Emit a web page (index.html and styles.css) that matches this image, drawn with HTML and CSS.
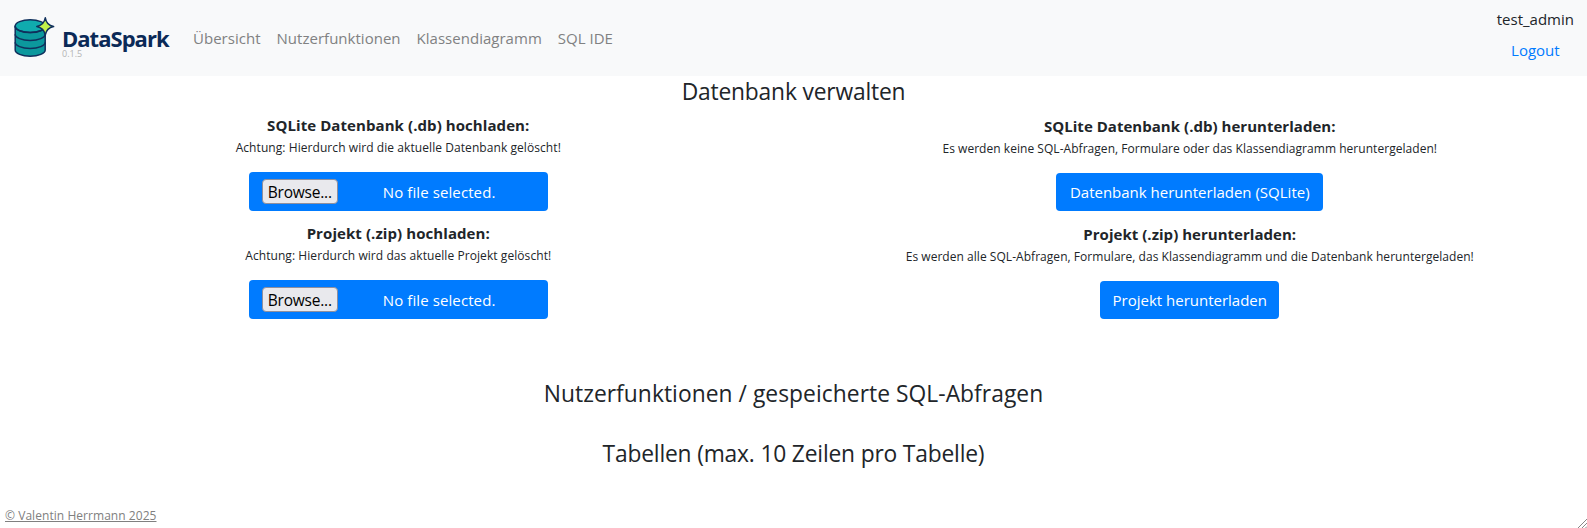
FILE: index.html
```
<!DOCTYPE html>
<html lang="de">
<head>
<meta charset="utf-8">
<title>DataSpark</title>
<link rel="stylesheet" href="styles.css">
</head>
<body>
<nav class="navbar">
  <a class="brand" href="#">
    <svg class="logo" width="42" height="42" viewBox="0 0 42 42" fill="none" stroke="#10305c" stroke-width="1.5" stroke-linejoin="round">
      <path d="M2.200 9v24c0 3.400 6.700 6.200 15 6.200s15-2.800 15-6.200V9z" fill="#0c989d"/>
      <ellipse cx="17.200" cy="9.200" rx="15" ry="6.400" fill="#10abae"/>
      <path d="M2.200 9.200c0 3.400 6.700 6.200 15 6.200s15-2.800 15-6.200M2.200 17.200c0 3.400 6.700 6.200 15 6.200s15-2.800 15-6.200M2.200 25.200c0 3.400 6.700 6.200 15 6.200s15-2.800 15-6.200"/>
      <path d="M32.300 .8Q33.400 8 40.600 9.500Q33.400 11 32.300 18Q31 11 23.800 9.500Q31 8 32.300 .8z" fill="#c3f24a"/>
    </svg>
    <span class="brand-text"><span class="name">DataSpark</span><span class="version">0.1.5</span></span>
  </a>
  <div class="links">
    <a href="#">Übersicht</a><a href="#">Nutzerfunktionen</a><a href="#">Klassendiagramm</a><a href="#">SQL IDE</a>
  </div>
  <div class="user"><span>test_admin</span><a href="#">Logout</a></div>
</nav>
<main>
  <h2 class="title title-main">Datenbank verwalten</h2>
  <div class="columns">
    <div class="col upload">
      <section class="item">
        <b>SQLite Datenbank (.db) hochladen:</b>
        <small>Achtung: Hierdurch wird die aktuelle Datenbank gelöscht!</small>
        <div class="file"><button class="browse">Browse...</button><span class="filename">No file selected.</span></div>
      </section>
      <section class="item">
        <b>Projekt (.zip) hochladen:</b>
        <small>Achtung: Hierdurch wird das aktuelle Projekt gelöscht!</small>
        <div class="file"><button class="browse">Browse...</button><span class="filename">No file selected.</span></div>
      </section>
    </div>
    <div class="col download">
      <section class="item">
        <b>SQLite Datenbank (.db) herunterladen:</b>
        <small>Es werden keine SQL-Abfragen, Formulare oder das Klassendiagramm heruntergeladen!</small>
        <a class="btn btn-db" href="#">Datenbank herunterladen (SQLite)</a>
      </section>
      <section class="item">
        <b>Projekt (.zip) herunterladen:</b>
        <small>Es werden alle SQL-Abfragen, Formulare, das Klassendiagramm und die Datenbank heruntergeladen!</small>
        <a class="btn btn-project" href="#">Projekt herunterladen</a>
      </section>
    </div>
  </div>
  <h2 class="title title-queries">Nutzerfunktionen / gespeicherte SQL-Abfragen</h2>
  <h2 class="title title-tables">Tabellen (max. 10 Zeilen pro Tabelle)</h2>
</main>
<footer class="footer"><a href="#">© Valentin Herrmann 2025</a></footer>
<svg class="grip" width="9" height="9" viewBox="0 0 9 9" stroke="#888" stroke-width="1"><path d="M0 9L9 0M4 9L9 4M7.500 9L9 7.500"/></svg>
</body>
</html>
```
FILE: styles.css
```
* { box-sizing: border-box; }
body {
  margin: 0;
  height: 528px;
  overflow: hidden;
  display: flex;
  flex-direction: column;
  position: relative;
  background: #fff;
  color: #212529;
  font: 15px/24px "Open Sans", "Noto Sans", sans-serif;
}
a { color: #007bff; text-decoration: none; }
.navbar {
  height: 76px;
  flex: none;
  display: flex;
  align-items: center;
  padding: 0 13px 0 13px;
  background: #f8f9fa;
}
.brand { display: flex; align-items: flex-start; width: 180px; height: 42px; }
.logo { flex: none; display: block; }
.brand-text { display: flex; flex-direction: column; padding: 9px 0 0 7px; }
.name { font-size: 22px; line-height: 24px; font-weight: 700; letter-spacing: -.98px; color: #0b2a57; }
.version { font-size: 9px; line-height: 10px; margin-top: -1px; color: #b4b4b4; }
.links { display: flex; gap: 16px; letter-spacing: .02px; }
.links a { color: #808182; }
.user {
  margin-left: auto;
  display: flex;
  flex-direction: column;
  align-items: center;
  gap: 7px;
  padding-bottom: 7px;
}
.title { margin: 0; font-size: 22.8px; line-height: 29px; font-weight: 400; text-align: center; }
.title-main { margin-top: 1px; letter-spacing: -.18px; }
.title-queries { margin-top: 46px; letter-spacing: .05px; }
.title-tables { margin-top: 31px; letter-spacing: -.18px; }
.columns { display: grid; grid-template-columns: 1fr 1fr; margin-top: 7px; height: 220px; }
.upload { padding-left: 3px; }
.download { padding: 1px 1px 0 0; }
.item { display: flex; flex-direction: column; align-items: center; height: 108px; }
.item b { line-height: 24px; letter-spacing: .08px; }
.download b { letter-spacing: .03px; }
.item small { font-size: 12px; line-height: 20px; margin-top: 1px; letter-spacing: .07px; }
.download small { letter-spacing: .04px; }
.file, .btn { margin-top: 14px; border-radius: 4px; background: #007bff; color: #fff; }
.file { width: 299px; height: 39px; display: flex; align-items: center; padding: 0 13px; }
.browse {
  width: 76px;
  height: 25px;
  padding: 0;
  border: 1px solid #8f8f9d;
  border-radius: 4px;
  background: #e9e9ed;
  color: #000;
  font: 15.500px/22px "Open Sans", "Noto Sans", sans-serif;
  letter-spacing: -.22px;
}
.filename { margin-left: 45px; letter-spacing: .1px; }
.btn { height: 38px; line-height: 38px; text-align: center; }
.btn-db { width: 267px; }
.btn-project { width: 179px; }
.footer { margin-top: auto; height: 22px; padding-left: 5px; font-size: 12px; line-height: 20px; }
.footer a { color: #808080; text-decoration: underline; letter-spacing: .05px; }
.grip { position: absolute; right: 0; bottom: 0; }
```
